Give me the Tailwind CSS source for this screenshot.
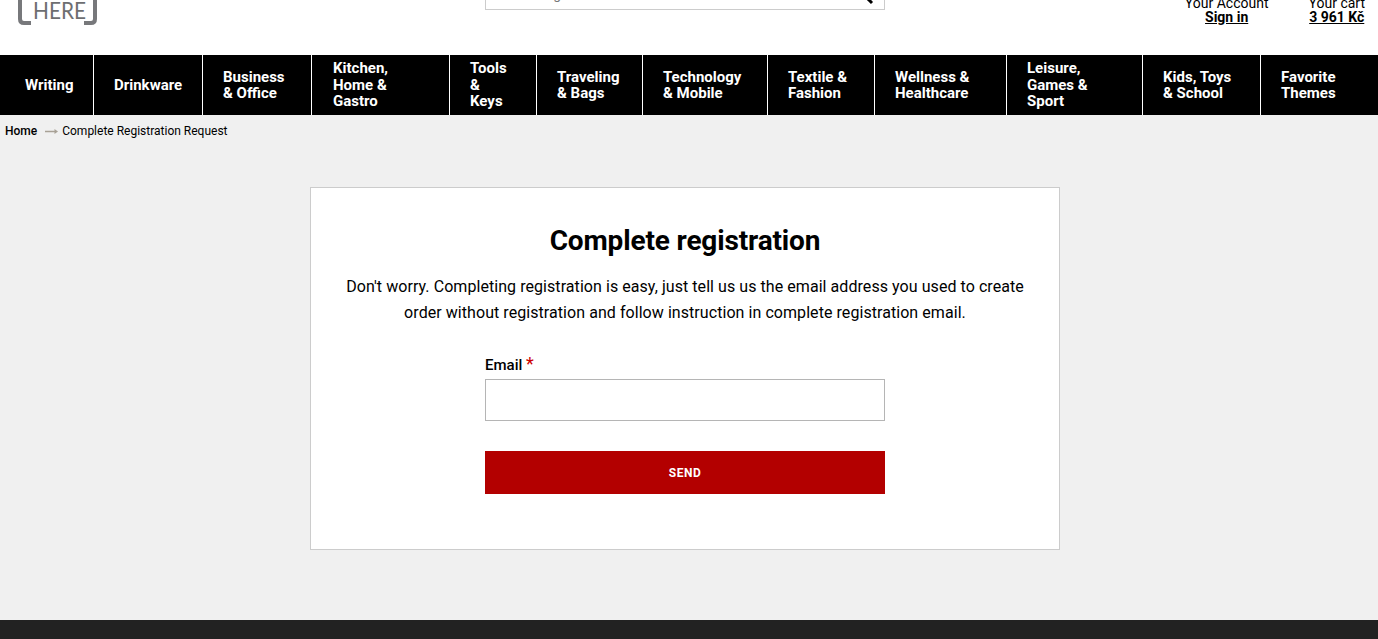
<!DOCTYPE html>
<html lang="en">
<head>
    <meta charset="UTF-8">
    <title>Complete Registration Request</title>
    <script src="https://cdn.jsdelivr.net/npm/@tailwindcss/browser@4"></script>
</head>
<body class="h-[639px] overflow-hidden bg-[#f0f0f0] font-['Roboto',sans-serif] text-black">
    <!-- header is scrolled, top part is cut off -->
    <header class="h-[55px] bg-white overflow-hidden flex items-start">
        <a href="#" class="block ml-[18px] w-[82px] -mt-[14px] shrink-0">
            <svg width="80" height="40" viewBox="0 0 80 40" fill="none">
                <path d="M2 2V33Q2 37 6 37H13" stroke="#77787b" stroke-width="4"/>
                <path d="M77 2V33Q77 37 73 37H66" stroke="#77787b" stroke-width="4"/>
                <text x="15" y="32.5" textLength="53" lengthAdjust="spacingAndGlyphs" font-family="Lato, sans-serif" font-size="23" fill="#6d6e71">HERE</text>
            </svg>
        </a>
        <div class="ml-[385px] w-[400px] h-[20px] -mt-[10px] border border-[#cccccc] bg-white relative overflow-hidden shrink-0">
            <span class="absolute left-[13px] top-[-5px] text-sm leading-[16px] text-[#777777]">Searching</span>
            <svg class="absolute left-[370px] top-[-4px]" width="18" height="18" viewBox="0 0 18 18" fill="none">
                <circle cx="7" cy="7" r="5" stroke="#000" stroke-width="2"/>
                <path d="M11 11L16 16" stroke="#000" stroke-width="3"/>
            </svg>
        </div>
        <div class="ml-auto flex gap-[40px] pr-[13px] -mt-[4px] text-sm leading-[14px]">
            <div class="text-center">
                <div>Your Account</div>
                <a href="#" class="font-bold underline">Sign in</a>
            </div>
            <div class="text-center">
                <div>Your cart</div>
                <a href="#" class="font-bold underline">3 961 Kč</a>
            </div>
        </div>
    </header>

    <nav class="h-[60px] bg-black flex text-white text-[15px] font-bold leading-[16.5px]">
        <a href="#" class="w-[94px] border-r border-white flex items-center pl-[25px]">Writing</a>
        <a href="#" class="w-[109px] border-r border-white flex items-center pl-[20px]">Drinkware</a>
        <a href="#" class="w-[109px] border-r border-white flex items-center pl-[20px]">Business<br>&amp; Office</a>
        <a href="#" class="w-[138px] border-r border-white flex items-center pl-[21px]">Kitchen,<br>Home &amp;<br>Gastro</a>
        <a href="#" class="w-[87px] border-r border-white flex items-center pl-[20px]">Tools<br>&amp;<br>Keys</a>
        <a href="#" class="w-[106px] border-r border-white flex items-center pl-[20px]">Traveling<br>&amp; Bags</a>
        <a href="#" class="w-[125px] border-r border-white flex items-center pl-[20px]">Technology<br>&amp; Mobile</a>
        <a href="#" class="w-[107px] border-r border-white flex items-center pl-[20px]">Textile &amp;<br>Fashion</a>
        <a href="#" class="w-[132px] border-r border-white flex items-center pl-[20px]">Wellness &amp;<br>Healthcare</a>
        <a href="#" class="w-[136px] border-r border-white flex items-center pl-[20px]">Leisure,<br>Games &amp;<br>Sport</a>
        <a href="#" class="w-[118px] border-r border-white flex items-center pl-[20px]">Kids, Toys<br>&amp; School</a>
        <a href="#" class="flex-1 flex items-center pl-[20px]">Favorite<br>Themes</a>
    </nav>

    <div class="h-[72px] pl-[5px] pt-[8px] flex items-start text-xs leading-[16px]">
        <a href="#" class="font-medium">Home</a>
        <svg class="ml-[8px] mr-[4px] mt-[5px]" width="13" height="7" viewBox="0 0 13 7"><path d="M0 3.5H10" stroke="#a8a196" stroke-width="1.5"/><path d="M9.5 1L13 3.5L9.5 6Z" fill="#a8a196"/></svg>
        <span>Complete Registration Request</span>
    </div>

    <main class="w-[750px] h-[363px] ml-[310px] bg-white border border-[#cccccc] flex flex-col items-center pt-[35px]">
        <h1 class="text-[28px] leading-[36px] font-bold tracking-[-0.15px]">Complete registration</h1>
        <p class="mt-[15px] text-base leading-[26px] font-normal text-center tracking-[0.06px]">Don't worry. Completing registration is easy, just tell us us the email address you used to create<br>order without registration and follow instruction in complete registration email.</p>
        <form class="w-[400px] mt-[26px]">
            <label class="block text-[15px] font-medium leading-[26px]">Email <span class="text-lg font-normal leading-[20px] text-[#cc0000]">*</span></label>
            <input type="text" class="block w-full h-[42px] mt-[1px] border border-[#b5b5b5] bg-white">
            <button type="button" class="block w-full h-[43px] mt-[30px] bg-[#b30000] text-white text-xs font-bold tracking-[0.5px]">SEND</button>
        </form>
    </main>

    <footer class="mt-[70px] h-[19px] bg-[#222222]"></footer>
</body>
</html>
